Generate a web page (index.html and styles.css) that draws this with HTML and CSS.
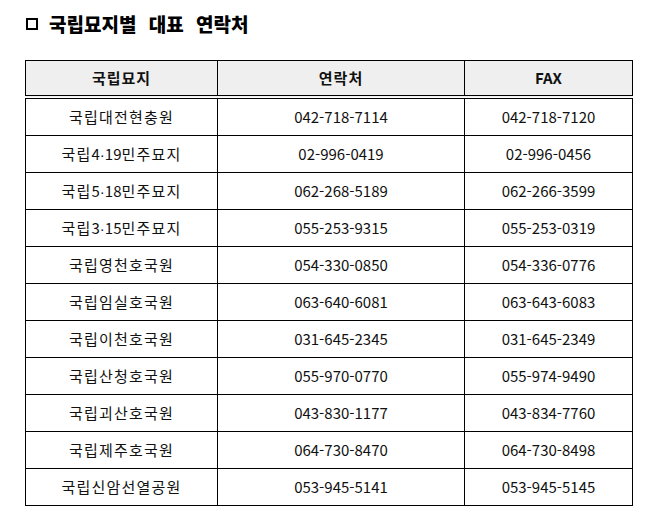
FILE: index.html
```html
<!DOCTYPE html>
<html lang="ko">
<head>
<meta charset="utf-8">
<title>국립묘지별 대표 연락처</title>
<link rel="stylesheet" href="styles.css">
</head>
<body>
<div class="page">
  <h1 class="title"><span class="box"></span>국립묘지별 대표 연락처</h1>
  <table class="contacts">
    <colgroup>
      <col class="c1"><col class="c2"><col class="c3">
    </colgroup>
    <thead>
      <tr><th>국립묘지</th><th>연락처</th><th class="fax">FAX</th></tr>
    </thead>
    <tbody>
      <tr><td class="name">국립대전현충원</td><td>042-718-7114</td><td>042-718-7120</td></tr>
      <tr><td class="name">국립<span class="num">4<span class="dot">·</span>19</span>민주묘지</td><td>02-996-0419</td><td>02-996-0456</td></tr>
      <tr><td class="name">국립<span class="num">5<span class="dot">·</span>18</span>민주묘지</td><td>062-268-5189</td><td>062-266-3599</td></tr>
      <tr><td class="name">국립<span class="num">3<span class="dot">·</span>15</span>민주묘지</td><td>055-253-9315</td><td>055-253-0319</td></tr>
      <tr><td class="name">국립영천호국원</td><td>054-330-0850</td><td>054-336-0776</td></tr>
      <tr><td class="name">국립임실호국원</td><td>063-640-6081</td><td>063-643-6083</td></tr>
      <tr><td class="name">국립이천호국원</td><td>031-645-2345</td><td>031-645-2349</td></tr>
      <tr><td class="name">국립산청호국원</td><td>055-970-0770</td><td>055-974-9490</td></tr>
      <tr><td class="name">국립괴산호국원</td><td>043-830-1177</td><td>043-834-7760</td></tr>
      <tr><td class="name">국립제주호국원</td><td>064-730-8470</td><td>064-730-8498</td></tr>
      <tr><td class="name">국립신암선열공원</td><td>053-945-5141</td><td>053-945-5145</td></tr>
    </tbody>
  </table>
</div>
</body>
</html>
```
FILE: styles.css
```css
html, body {
  margin: 0;
  padding: 0;
  background: #ffffff;
}
.page {
  padding: 9px 0 0 25px;
  font-family: "Noto Sans CJK KR", "Noto Sans", sans-serif;
  color: #111;
}
.title {
  margin: 0 0 0 1px;
  height: 30px;
  display: flex;
  align-items: center;
  font-size: 19px;
  font-weight: 900;
  line-height: 22px;
  word-spacing: 7px;
  letter-spacing: 0;
  color: #000;
}
.box {
  display: inline-block;
  width: 8px;
  height: 8px;
  border: 2px solid #000;
  margin-right: 11px;
}
.contacts {
  margin-top: 21px;
  border-collapse: collapse;
  table-layout: fixed;
  width: 607px;
}
.c1 { width: 192px; }
.c2 { width: 247px; }
.c3 { width: 168px; }
.contacts th, .contacts td {
  border: 1px solid #000;
  text-align: center;
  padding: 0;
  font-size: 15px;
  line-height: 20px;
}
.contacts th {
  background: #efefef;
  height: 34px;
  font-weight: 700;
  font-size: 15px;
  border-bottom: 4px double #000;
  letter-spacing: 1px;
}
.contacts th.fax {
  letter-spacing: 0;
}
.contacts td {
  height: 36px;
}
.contacts td.name {
  letter-spacing: 1.2px;
}
.contacts td.name .num {
  letter-spacing: 0;
}
.dot {
  font-family: "Liberation Sans", sans-serif;
  letter-spacing: 0;
}
```
